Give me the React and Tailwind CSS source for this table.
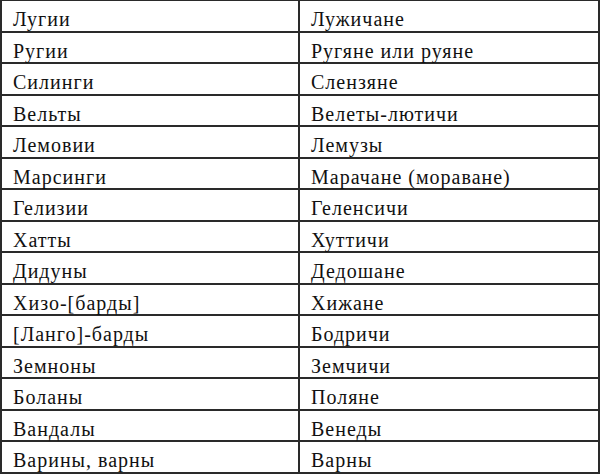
const rows = [
  ["Лугии", "Лужичане"],
  ["Ругии", "Ругяне или руяне"],
  ["Силинги", "Слензяне"],
  ["Вельты", "Велеты-лютичи"],
  ["Лемовии", "Лемузы"],
  ["Марсинги", "Марачане (мораване)"],
  ["Гелизии", "Геленсичи"],
  ["Хатты", "Хуттичи"],
  ["Дидуны", "Дедошане"],
  ["Хизо-[барды]", "Хижане"],
  ["[Ланго]-барды", "Бодричи"],
  ["Земноны", "Земчичи"],
  ["Боланы", "Поляне"],
  ["Вандалы", "Венеды"],
  ["Варины, варны", "Варны"],
];

export default function App() {
  return (
    <div className="w-[600px] h-[474px] bg-white flex flex-col border-t border-l-2 border-r-2 border-b-2 border-[#2a2a2a] text-[#111] text-[20px] leading-[23px] tracking-[1px] font-['Liberation_Serif',serif]">
      {rows.map(([a, b], i) => (
        <div
          key={i}
          className={i < rows.length - 1 ? "flex-1 flex min-h-0 border-b-2 border-[#2a2a2a]" : "flex-1 flex min-h-0"}
        >
          <div className="w-[298px] border-r-2 border-[#2a2a2a] pl-[11px] pt-[7px] whitespace-nowrap">
            {a}
          </div>
          <div className="flex-1 pl-[11px] pt-[7px] whitespace-nowrap">{b}</div>
        </div>
      ))}
    </div>
  );
}
